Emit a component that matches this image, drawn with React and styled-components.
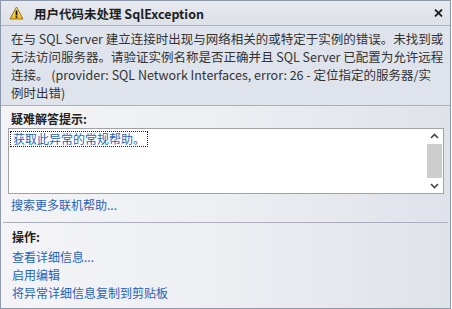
import React from "react";
import styled, { createGlobalStyle } from "styled-components";

const Global = createGlobalStyle`
  html, body { margin: 0; padding: 0; background: #ffffff; }
  body { font-family: "Noto Sans CJK SC", "Noto Sans", sans-serif; font-size: 12px; }
`;

const Dialog = styled.div`
  box-sizing: border-box;
  width: 451px;
  height: 309px;
  border: 1px solid #8d99ab;
  display: flex;
  flex-direction: column;
  background: linear-gradient(90deg, #f4f4f6 0%, #eceef2 50%, #e0e2ea 100%);
  color: #2a2a2a;
  overflow: hidden;
`;

const TitleBar = styled.div`
  height: 24px;
  flex: none;
  display: flex;
  align-items: center;
  padding: 0 6px 0 8px;
  background: linear-gradient(180deg, #e6e9ee 0%, #dde1e8 100%);
  border-bottom: 1px solid #a9b2bf;
`;

const Title = styled.div`
  flex: 1;
  margin-left: 10px;
  font-weight: bold;
  font-size: 12.5px;
  color: #1e1e1e;
  white-space: nowrap;
`;

const CloseButton = styled.div`
  width: 12px;
  height: 12px;
  display: flex;
  align-items: center;
  justify-content: center;
`;

const Message = styled.div`
  flex: none;
  padding: 4px 8px 3px 10px;
  font-size: 12.5px;
  line-height: 18px;
  background: #dfe3eb;
  border-bottom: 1px solid #a9b0bb;
  color: #333;
`;

const Line = styled.div`
  white-space: nowrap;
`;

const Section = styled.div`
  display: flex;
  flex-direction: column;
  padding: ${(p) => p.$pad || "0 6px 0 8px"};
`;

const Label = styled.div`
  font-weight: bold;
  line-height: 18px;
  padding-left: 3px;
  color: #222;
`;

const Link = styled.a`
  color: #2863b6;
  text-decoration: none;
  line-height: 18px;
  padding-left: 3px;
  white-space: nowrap;
  margin-top: ${(p) => p.$mt || "0"};
`;

const TextBox = styled.div`
  height: 64px;
  border: 1px solid #a2a2a2;
  background: #ffffff;
  display: flex;
`;

const BoxContent = styled.div`
  flex: 1;
  padding: 1px 2px;
`;

const FocusLink = styled.a`
  display: inline-block;
  color: #2863b6;
  text-decoration: none;
  line-height: 14px;
  padding: 0 2px;
  outline: 1px dotted #222;
  outline-offset: 0;
  margin-top: 1px;
`;

const ScrollBar = styled.div`
  width: 16px;
  display: flex;
  flex-direction: column;
  align-items: center;
  margin-right: 1px;
`;

const Arrow = styled.div`
  height: 14px;
  display: flex;
  align-items: center;
  justify-content: center;
`;

const Thumb = styled.div`
  flex: 1;
  width: 15px;
  background: #cdcdcd;
  margin: 1px 0;
`;

const Separator = styled.div`
  height: 1px;
  background: #a9b0bb;
  margin: ${(p) => p.$m || "0"};
`;

const WarningIcon = () => (
  <svg width="15" height="14" viewBox="0 0 15 14">
    <defs>
      <linearGradient id="wg" x1="0" y1="0" x2="0" y2="1">
        <stop offset="0" stopColor="#fff3a0" />
        <stop offset="1" stopColor="#f2b81a" />
      </linearGradient>
    </defs>
    <path d="M7.5 1 L14 13 L1 13 Z" fill="url(#wg)" stroke="#9a7410" strokeWidth="1" strokeLinejoin="round" />
    <rect x="6.6" y="4.5" width="1.8" height="5" fill="#111" />
    <rect x="6.6" y="10.3" width="1.8" height="1.6" fill="#111" />
  </svg>
);

const CloseIcon = () => (
  <svg width="9" height="8" viewBox="0 0 9 8">
    <path d="M1 0.5 L8 7.5 M8 0.5 L1 7.5" stroke="#222" strokeWidth="1.8" />
  </svg>
);

const Chevron = ({ up }) => (
  <svg width="9" height="6" viewBox="0 0 9 6">
    <path d={up ? "M1 5 L4.5 1.5 L8 5" : "M1 1 L4.5 4.5 L8 1"} fill="none" stroke="#444" strokeWidth="1.6" />
  </svg>
);

export default function App() {
  return (
    <>
      <Global />
      <Dialog>
        <TitleBar>
          <WarningIcon />
          <Title>用户代码未处理 SqlException</Title>
          <CloseButton>
            <CloseIcon />
          </CloseButton>
        </TitleBar>
        <Message>
          <Line>在与 SQL Server 建立连接时出现与网络相关的或特定于实例的错误。未找到或</Line>
          <Line>无法访问服务器。请验证实例名称是否正确并且 SQL Server 已配置为允许远程</Line>
          <Line>连接。 (provider: SQL Network Interfaces, error: 26 - 定位指定的服务器/实</Line>
          <Line>例时出错)</Line>
        </Message>
        <Section $pad="4px 6px 0 7px">
          <Label>疑难解答提示:</Label>
          <TextBox>
            <BoxContent>
              <FocusLink>获取此异常的常规帮助。</FocusLink>
            </BoxContent>
            <ScrollBar>
              <Arrow><Chevron up /></Arrow>
              <Thumb />
              <Arrow><Chevron /></Arrow>
            </ScrollBar>
          </TextBox>
          <Link $mt="2px">搜索更多联机帮助...</Link>
        </Section>
        <Separator $m="8px 2px 0 2px" />
        <Section $pad="5px 6px 0 8px">
          <Label>操作:</Label>
          <Link $mt="2px">查看详细信息...</Link>
          <Link>启用编辑</Link>
          <Link>将异常详细信息复制到剪贴板</Link>
        </Section>
      </Dialog>
    </>
  );
}
